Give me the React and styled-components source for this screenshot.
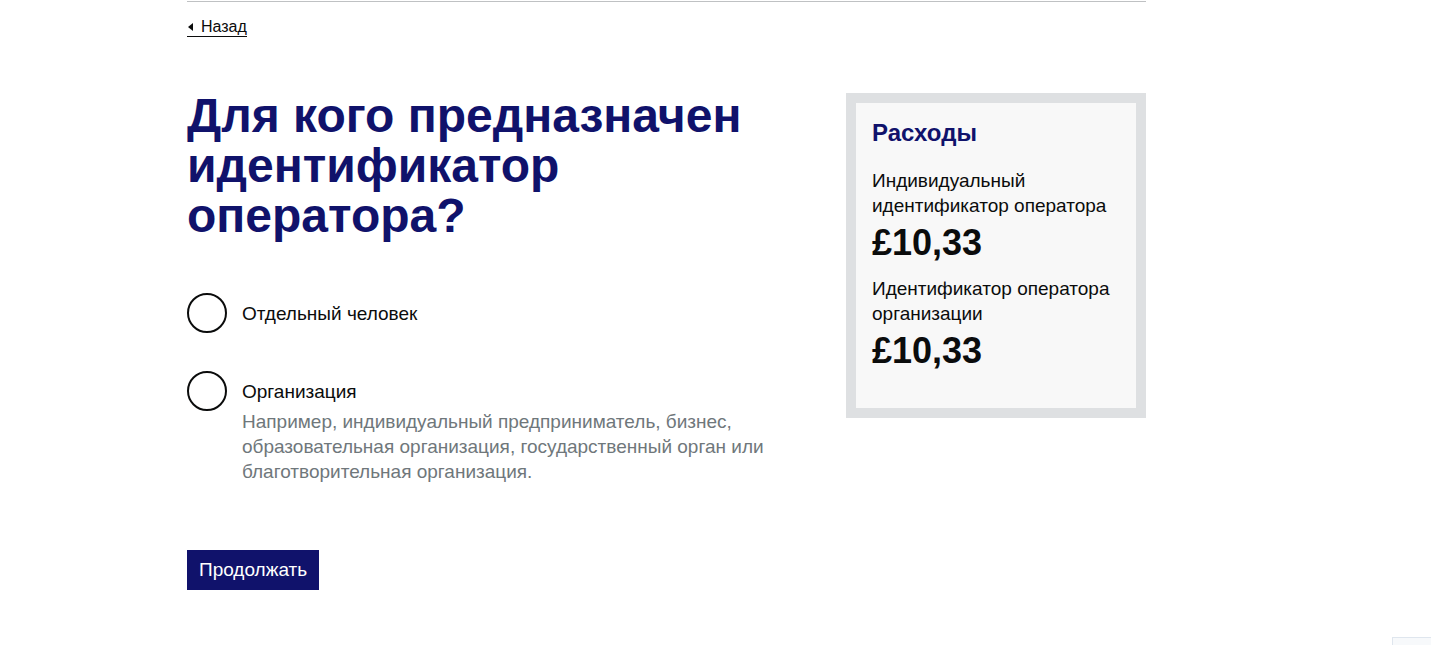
import React from 'react'
import styled, { createGlobalStyle } from 'styled-components'

const GlobalStyle = createGlobalStyle`
    html, body {
        margin: 0;
        padding: 0;
        background: #ffffff;
        font-family: "Liberation Sans", Arial, sans-serif;
        color: #0b0c0c;
    }
`

const App = () => {
    return (
        <>
            <GlobalStyle />
            <Page>
                <TopRule />
                <BackLink href="#">Назад</BackLink>
                <Columns>
                    <Main>
                        <Heading>Для кого предназначен идентификатор оператора?</Heading>
                        <RadioGroup>
                            <RadioItem>
                                <RadioCircle />
                                <RadioText>
                                    <RadioLabel>Отдельный человек</RadioLabel>
                                </RadioText>
                            </RadioItem>
                            <RadioItem>
                                <RadioCircle />
                                <RadioText>
                                    <RadioLabel>Организация</RadioLabel>
                                    <RadioHint>
                                        Например, индивидуальный предприниматель, бизнес,
                                        образовательная организация, государственный орган или
                                        благотворительная организация.
                                    </RadioHint>
                                </RadioText>
                            </RadioItem>
                        </RadioGroup>
                        <Button>Продолжать</Button>
                    </Main>
                    <Aside>
                        <CostPanel>
                            <CostTitle>Расходы</CostTitle>
                            <CostLabel>Индивидуальный идентификатор оператора</CostLabel>
                            <CostValue>£10,33</CostValue>
                            <CostLabel>Идентификатор оператора организации</CostLabel>
                            <CostValue>£10,33</CostValue>
                        </CostPanel>
                    </Aside>
                </Columns>
            </Page>
            <CornerTab />
        </>
    )
}

const Page = styled.div`
    width: 959px;
    margin-left: 187px;
`

const TopRule = styled.div`
    height: 1px;
    margin-top: 1px;
    background: #bfc1c3;
`

const BackLink = styled.a`
    display: inline-block;
    position: relative;
    margin-top: 15px;
    padding-left: 14px;
    font-size: 16px;
    line-height: 19px;
    color: #0b0c0c;
    text-decoration: none;
    border-bottom: 1px solid #0b0c0c;

    &::before {
        content: '';
        position: absolute;
        left: 1px;
        top: 6px;
        border-style: solid;
        border-width: 4px 5px 4px 0;
        border-color: transparent #0b0c0c transparent transparent;
    }
`

const Columns = styled.div`
    display: flex;
    justify-content: space-between;
    margin-top: 54px;
`

const Main = styled.main`
    width: 620px;
`

const Heading = styled.h1`
    margin: 0;
    font-size: 48px;
    line-height: 50px;
    font-weight: 700;
    color: #10126b;
`

const RadioGroup = styled.div`
    display: flex;
    flex-direction: column;
    gap: 38px;
    margin-top: 52px;
`

const RadioItem = styled.label`
    display: flex;
    align-items: flex-start;
    gap: 15px;
`

const RadioCircle = styled.span`
    flex: none;
    width: 40px;
    height: 40px;
    box-sizing: border-box;
    border: 2px solid #0b0c0c;
    border-radius: 50%;
`

const RadioText = styled.div`
    display: flex;
    flex-direction: column;
    padding-top: 8px;
`

const RadioLabel = styled.span`
    font-size: 19px;
    line-height: 25px;
    color: #0b0c0c;
`

const RadioHint = styled.span`
    margin-top: 5px;
    font-size: 19px;
    line-height: 25px;
    color: #6f777b;
`

const Button = styled.button`
    margin-top: 66px;
    height: 40px;
    padding: 0 12px;
    border: none;
    border-radius: 0;
    background: #10126b;
    color: #ffffff;
    font-family: "Liberation Sans", Arial, sans-serif;
    font-size: 19px;
    cursor: pointer;
`

const Aside = styled.aside`
    width: 300px;
    padding-top: 2px;
`

const CostPanel = styled.div`
    border: 10px solid #dee0e2;
    background: #f8f8f8;
    padding: 15px 16px 24px;
`

const CostTitle = styled.h2`
    margin: 0 0 20px;
    font-size: 24px;
    line-height: 30px;
    font-weight: 700;
    color: #10126b;
`

const CostLabel = styled.p`
    margin: 0;
    font-size: 19px;
    line-height: 25px;
    color: #0b0c0c;
`

const CostValue = styled.p`
    margin: 5px 0 13px;
    font-size: 36px;
    line-height: 40px;
    font-weight: 700;
    color: #0b0c0c;
`

const CornerTab = styled.div`
    position: fixed;
    right: 0;
    bottom: 0;
    width: 38px;
    height: 7px;
    border: 1px solid #dfe6ee;
    border-right: none;
    border-bottom: none;
    background: #f7f9fb;
`

export default App
